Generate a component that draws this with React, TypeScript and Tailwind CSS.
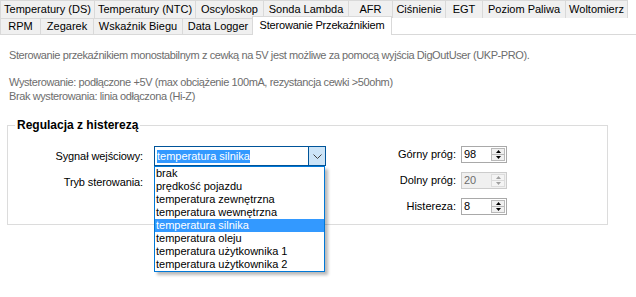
const ROW1 = [
  { label: 'Temperatury (DS)', cls: 'w-[95px] border-l' },
  { label: 'Temperatury (NTC)', cls: 'w-[101px]' },
  { label: 'Oscyloskop', cls: 'w-[68px]' },
  { label: 'Sonda Lambda', cls: 'w-[85px]' },
  { label: 'AFR', cls: 'w-[44px]' },
  { label: 'Ciśnienie', cls: 'w-[53px]' },
  { label: 'EGT', cls: 'w-[37px]' },
  { label: 'Poziom Paliwa', cls: 'w-[83px]' },
  { label: 'Woltomierz', cls: 'w-[62px]' },
]

const ROW2 = [
  { label: 'RPM', cls: 'w-[41px] border-l' },
  { label: 'Zegarek', cls: 'w-[53px]' },
  { label: 'Wskaźnik Biegu', cls: 'w-[89px]' },
  { label: 'Data Logger', cls: 'w-[71px]' },
]

const OPTIONS = [
  'brak',
  'prędkość pojazdu',
  'temperatura zewnętrzna',
  'temperatura wewnętrzna',
  'temperatura silnika',
  'temperatura oleju',
  'temperatura użytkownika 1',
  'temperatura użytkownika 2',
]

function Chevron() {
  return (
    <svg width="9" height="5" viewBox="0 0 9 5" fill="none">
      <path d="M0.5 0.5 4.5 4.5 8.5 0.5" stroke="#404040" strokeWidth="1" />
    </svg>
  )
}

function Arrow({ up, color }: { up?: boolean; color: string }) {
  return (
    <svg width="5" height="3" viewBox="0 0 5 3">
      <path d={up ? 'M2.5 0 5 3H0z' : 'M0 0h5L2.5 3z'} fill={color} />
    </svg>
  )
}

function Spin({ value, disabled = false }: { value: string; disabled?: boolean }) {
  const arrow = disabled ? '#a0a0a0' : '#000'
  return (
    <div
      className={`box-border flex h-[17px] w-[46px] border ${
        disabled ? 'border-[#cccccc] bg-[#f0f0f0] text-[#6d6d6d]' : 'border-[#a9a9a9] bg-white text-black'
      }`}
    >
      <div className="flex flex-1 items-center pl-[2px] leading-[13px]">{value}</div>
      <div
        className={`my-[1px] mr-[1px] flex w-[14px] flex-col border ${
          disabled ? 'border-[#dcdcdc] bg-[#f4f4f4]' : 'border-[#b9b9b9] bg-[#f0f0f0]'
        }`}
      >
        <div className="flex flex-1 items-center justify-center">
          <Arrow up color={arrow} />
        </div>
        <div className={`flex flex-1 items-center justify-center border-t ${disabled ? 'border-[#dcdcdc]' : 'border-[#b9b9b9]'}`}>
          <Arrow color={arrow} />
        </div>
      </div>
    </div>
  )
}

export default function App() {
  return (
    <div className="relative h-[297px] w-[636px] overflow-hidden bg-white font-['Liberation_Sans',Arial,sans-serif] text-[11px] text-black">
      {/* tab strip, two rows */}
      <div className="flex h-[18px]">
        {ROW1.map((t) => (
          <div
            key={t.label}
            className={`flex items-center justify-center border-t border-r border-[#d9d9d9] bg-[#f0f0f0] leading-none ${t.cls}`}
          >
            {t.label}
          </div>
        ))}
      </div>
      <div className="flex h-[16px]">
        {ROW2.map((t) => (
          <div
            key={t.label}
            className={`flex items-center justify-center border-t border-r border-[#d9d9d9] bg-[#f0f0f0] leading-none ${t.cls}`}
          >
            {t.label}
          </div>
        ))}
        <div className="relative z-10 -mt-[2px] -ml-[2px] flex h-[19px] w-[140px] items-center justify-center border-x border-t border-[#d9d9d9] bg-white pb-[1px] leading-none tracking-[-0.2px]">
          Sterowanie Przekaźnikiem
        </div>
      </div>

      {/* page */}
      <div className="border-t border-[#d9d9d9]">
        <div className="pl-[9px] pt-[14px] leading-[13.5px] tracking-[-0.4px] text-[#6d6d6d]">
          <p>Sterowanie przekaźnikiem monostabilnym z cewką na 5V jest możliwe za pomocą wyjścia DigOutUser (UKP-PRO).</p>
          <p className="mt-[13.5px]">Wysterowanie: podłączone +5V (max obciążenie 100mA, rezystancja cewki &gt;50ohm)</p>
          <p>Brak wysterowania: linia odłączona (Hi-Z)</p>
        </div>

        <fieldset className="ml-[7px] mt-[15px] box-border h-[107px] w-[601px] border border-[#dcdcdc]">
          <legend className="ml-[7px] px-[2px] text-[12px] font-bold leading-[14px]">Regulacja z histerezą</legend>

          <div className="flex">
            {/* left column: input signal / mode */}
            <div className="flex flex-col gap-[6px] pt-[14px]">
              <div className="flex items-center">
                <span className="w-[135px] text-right tracking-[-0.1px]">Sygnał wejściowy:</span>
                <div className="relative ml-[11px] box-border flex h-[20px] w-[172px] border border-[#005499] bg-white">
                  <div className="flex flex-1 items-center pl-[2px]">
                    <span className="bg-[#3399ff] leading-[13px] text-white">temperatura silnika</span>
                  </div>
                  <div className="flex w-[17px] items-center justify-center border-l border-[#005499] bg-[#cce4f7]">
                    <Chevron />
                  </div>

                  {/* open dropdown list */}
                  <div className="absolute left-[-1px] top-[19px] z-20 box-border w-[171px] border border-[#0078d7] bg-white shadow-[3px_3px_3px_rgba(0,0,0,0.28)]">
                    {OPTIONS.map((o) => (
                      <div
                        key={o}
                        className={`h-[13px] pl-[1px] leading-[13px] ${
                          o === 'temperatura silnika' ? 'bg-[#3399ff] text-white' : 'text-black'
                        }`}
                      >
                        {o}
                      </div>
                    ))}
                  </div>
                </div>
              </div>
              <div className="flex h-[20px] items-center">
                <span className="w-[135px] text-right tracking-[-0.1px]">Tryb sterowania:</span>
              </div>
            </div>

            {/* right column: thresholds */}
            <div className="ml-[60px] flex flex-col gap-[9px] pt-[14px]">
              <div className="flex items-center">
                <span className="w-[70px] text-right">Górny próg:</span>
                <div className="ml-[5px]">
                  <Spin value="98" />
                </div>
              </div>
              <div className="flex items-center">
                <span className="w-[70px] text-right">Dolny próg:</span>
                <div className="ml-[5px]">
                  <Spin value="20" disabled />
                </div>
              </div>
              <div className="flex items-center">
                <span className="w-[70px] text-right">Histereza:</span>
                <div className="ml-[5px]">
                  <Spin value="8" />
                </div>
              </div>
            </div>
          </div>
        </fieldset>
      </div>
    </div>
  )
}
